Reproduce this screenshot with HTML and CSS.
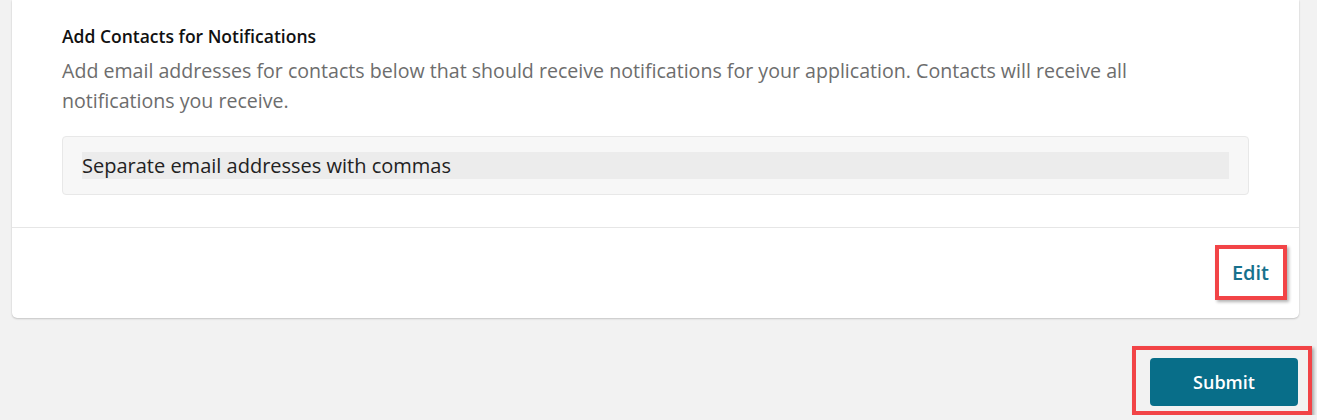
FILE: index.html
```html
<!DOCTYPE html>
<html lang="en">
<head>
<meta charset="utf-8">
<title>Add Contacts for Notifications</title>
<link rel="stylesheet" href="styles.css">
</head>
<body>
<div class="page">
  <section class="card">
    <div class="card-body">
      <h3 class="title">Add Contacts for Notifications</h3>
      <p class="desc">Add email addresses for contacts below that should receive notifications for your application. Contacts will receive all notifications you receive.</p>
      <div class="input-box">
        <div class="input-field">Separate email addresses with commas</div>
      </div>
    </div>
    <div class="card-footer">
      <a class="edit-link highlight" href="#">Edit</a>
    </div>
  </section>
  <div class="actions">
    <div class="highlight submit-wrap">
      <button class="submit-btn" type="button">Submit</button>
    </div>
  </div>
</div>
</body>
</html>
```
FILE: styles.css
```css
html, body {
  margin: 0;
  padding: 0;
}
body {
  background: #f2f2f2;
  font-family: "Open Sans", "Noto Sans", sans-serif;
  color: #222;
}
.page {
  padding: 0 18px 0 12px;
}
.card {
  background: #fff;
  border-radius: 0 0 5px 5px;
  box-shadow: 0 1px 2px rgba(0, 0, 0, 0.18), 0 0 1px rgba(0, 0, 0, 0.12);
}
.card-body {
  padding: 24px 50px 32px;
}
.title {
  margin: 0;
  font-size: 17.5px;
  line-height: 24px;
  font-weight: 600;
  color: #111;
}
.desc {
  margin: 8px 0 0;
  max-width: 1110px;
  font-size: 19.6px;
  line-height: 30px;
  color: #6d6d6d;
}
.input-box {
  margin-top: 20px;
  background: #f7f7f7;
  border: 1px solid #e8e8e8;
  border-radius: 4px;
  padding: 15px 19px;
}
.input-field {
  background: #ececec;
  font-size: 20px;
  line-height: 27px;
  color: #222;
}
.card-footer {
  border-top: 1px solid #e6e6e6;
  display: flex;
  justify-content: flex-end;
  padding: 17px 12px 18px 0;
}
.highlight {
  border: 4px solid #f24447;
  box-shadow: 2px 2px 3px rgba(0, 0, 0, 0.3);
}
.edit-link {
  display: block;
  padding: 10px 14px 10px 13px;
  font-size: 20px;
  line-height: 27px;
  font-weight: 600;
  color: #17718d;
  text-decoration: none;
}
.actions {
  display: flex;
  justify-content: flex-end;
  margin: 28px -13px 0 0;
}
.submit-wrap {
  padding: 8px 10px 5px 14px;
}
.submit-btn {
  display: block;
  width: 148px;
  height: 48px;
  border: none;
  border-radius: 4px;
  background: #086e89;
  color: #fff;
  font-family: "Open Sans", "Noto Sans", sans-serif;
  font-size: 18px;
  font-weight: 600;
  cursor: pointer;
}
```
